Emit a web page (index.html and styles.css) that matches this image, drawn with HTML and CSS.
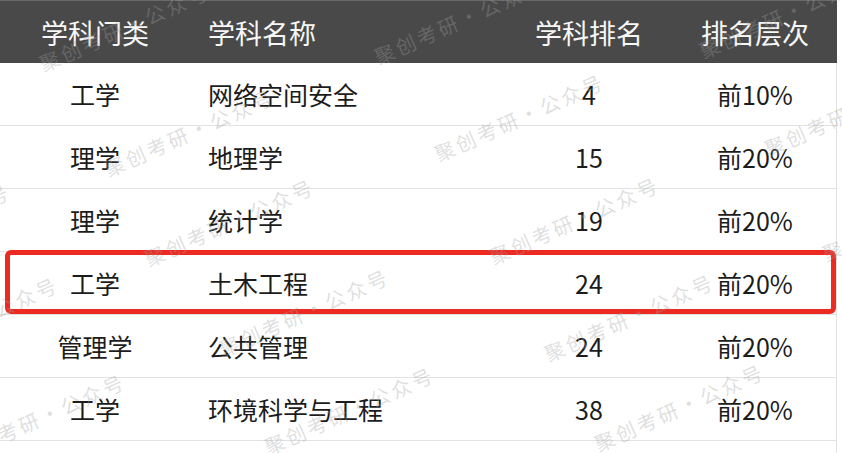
FILE: index.html
```html
<!DOCTYPE html>
<html lang="zh-CN">
<head>
<meta charset="utf-8">
<title>学科排名</title>
<link rel="stylesheet" href="styles.css">
</head>
<body>
<div class="sheet">
  <div class="table">
    <div class="row head">
      <div class="c1">学科门类</div>
      <div class="c2">学科名称</div>
      <div class="c3">学科排名</div>
      <div class="c4">排名层次</div>
    </div>
    <div class="row">
      <div class="c1">工学</div>
      <div class="c2">网络空间安全</div>
      <div class="c3">4</div>
      <div class="c4">前10%</div>
    </div>
    <div class="row">
      <div class="c1">理学</div>
      <div class="c2">地理学</div>
      <div class="c3">15</div>
      <div class="c4">前20%</div>
    </div>
    <div class="row">
      <div class="c1">理学</div>
      <div class="c2">统计学</div>
      <div class="c3">19</div>
      <div class="c4">前20%</div>
    </div>
    <div class="row">
      <div class="c1">工学</div>
      <div class="c2">土木工程</div>
      <div class="c3">24</div>
      <div class="c4">前20%</div>
    </div>
    <div class="row">
      <div class="c1">管理学</div>
      <div class="c2">公共管理</div>
      <div class="c3">24</div>
      <div class="c4">前20%</div>
    </div>
    <div class="row">
      <div class="c1">工学</div>
      <div class="c2">环境科学与工程</div>
      <div class="c3">38</div>
      <div class="c4">前20%</div>
    </div>
    <div class="row">
      <div class="c1"></div>
      <div class="c2"></div>
      <div class="c3"></div>
      <div class="c4"></div>
    </div>
  </div>

  <div class="highlight"></div>

  <div class="watermarks">
    <span class="wm" style="left:45px;top:75px">聚创考研·公众号</span>
    <span class="wm" style="left:380px;top:68px">聚创考研·公众号</span>
    <span class="wm" style="left:705px;top:62px">聚创考研·公众号</span>
    <span class="wm" style="left:110px;top:180px">聚创考研·公众号</span>
    <span class="wm" style="left:440px;top:165px">聚创考研·公众号</span>
    <span class="wm" style="left:770px;top:160px">聚创考研·公众号</span>
    <span class="wm" style="left:150px;top:270px">聚创考研·公众号</span>
    <span class="wm" style="left:495px;top:268px">聚创考研·公众号</span>
    <span class="wm" style="left:828px;top:265px">聚创考研·公众号</span>
    <span class="wm" style="left:225px;top:360px">聚创考研·公众号</span>
    <span class="wm" style="left:550px;top:365px">聚创考研·公众号</span>
    <span class="wm" style="left:-106px;top:368px">聚创考研·公众号</span>
    <span class="wm" style="left:-154px;top:275px">聚创考研·公众号</span>
    <span class="wm" style="left:-39px;top:465px">聚创考研·公众号</span>
    <span class="wm" style="left:270px;top:458px">聚创考研·公众号</span>
    <span class="wm" style="left:600px;top:455px">聚创考研·公众号</span>
  </div>
</div>
</body>
</html>
```

FILE: styles.css
```css
* {
  box-sizing: border-box;
}

html, body {
  margin: 0;
  padding: 0;
  background: #ffffff;
}

body {
  font-family: "Noto Sans CJK SC", "Noto Sans", sans-serif;
  color: #1c1c1c;
  width: 842px;
  height: 453px;
  overflow: hidden;
}

.sheet {
  position: relative;
  width: 842px;
  height: 453px;
  overflow: hidden;
}

.table {
  width: 837px;
  display: flex;
  flex-direction: column;
  border-right: 1px solid #e2e2e2;
}

.row {
  display: grid;
  grid-template-columns: 190px 290px 218px 138px;
  height: 63px;
  align-items: center;
  border-bottom: 1px solid #e2e2e2;
  font-size: 25px;
  line-height: 1;
}

.row.head {
  background: #494949;
  color: #f7f7f7;
  font-size: 27px;
  border-bottom: none;
  border-top: 1px solid #6a6a6a;
  margin-right: -1px;
}

.c1 {
  text-align: center;
}

.c2 {
  padding-left: 18px;
}

.c3 {
  text-align: center;
}

.c4 {
  text-align: center;
  padding-right: 24px;
}

.highlight {
  position: absolute;
  left: 5px;
  top: 250px;
  width: 831px;
  height: 64px;
  border: 5px solid #ec2a22;
  border-radius: 6px;
}

.watermarks {
  position: absolute;
  inset: 0;
  pointer-events: none;
}

.wm {
  position: absolute;
  display: block;
  white-space: nowrap;
  font-size: 20px;
  line-height: 22px;
  letter-spacing: 3px;
  font-weight: normal;
  color: rgba(160, 160, 160, 0.34);
  transform-origin: 0 100%;
  transform: translateY(-22px) rotate(-24deg);
}
```
